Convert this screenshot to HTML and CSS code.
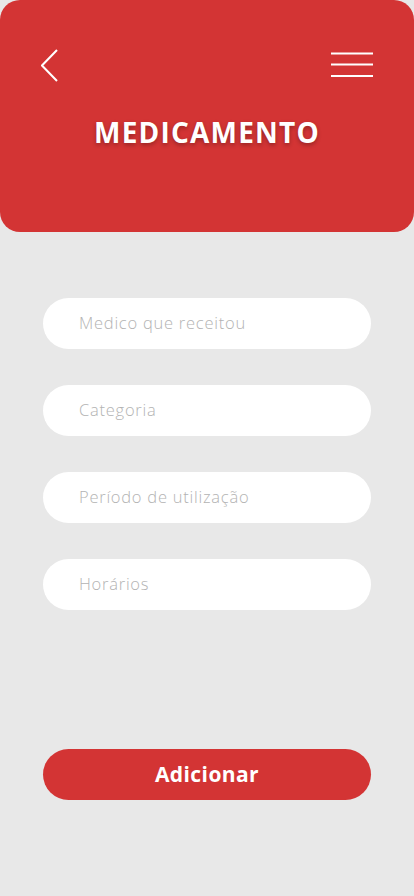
FILE: index.html
```html
<!DOCTYPE html>
<html lang="pt">
<head>
<meta charset="utf-8">
<link rel="stylesheet" href="styles.css">
</head>
<body>
<div class="screen">
  <header class="header">
    <div class="icons">
      <svg class="back" width="20" height="34" viewBox="0 0 20 34"><polyline points="16,1 1,16.5 16,32" fill="none" stroke="#fff" stroke-width="2"/></svg>
      <svg class="menu" width="42" height="26" viewBox="0 0 42 26"><g stroke="#fff" stroke-width="2.2"><line x1="0" y1="1.5" x2="42" y2="1.5"/><line x1="0" y1="12.5" x2="42" y2="12.5"/><line x1="0" y1="24" x2="42" y2="24"/></g></svg>
    </div>
    <h1 class="title">MEDICAMENTO</h1>
  </header>
  <form class="form">
    <input class="field" type="text" placeholder="Medico que receitou">
    <input class="field" type="text" placeholder="Categoria">
    <input class="field" type="text" placeholder="Período de utilização">
    <input class="field" type="text" placeholder="Horários">
    <button class="btn" type="button">Adicionar</button>
  </form>
</div>
</body>
</html>
```
FILE: styles.css
```css
* { box-sizing: border-box; }
html, body { margin: 0; padding: 0; }
body { background: #e8e8e8; font-family: "Open Sans", "Liberation Sans", sans-serif; }
.screen { width: 414px; height: 896px; display: flex; flex-direction: column; }
.header {
  height: 232px;
  background: #d33434;
  border-radius: 20px;
  padding: 49px 41px 0 41px;
  display: flex;
  flex-direction: column;
}
.icons { display: flex; justify-content: space-between; align-items: flex-start; }
.back { display: block; }
.menu { display: block; margin-top: 3px; }
.title {
  margin: 30px 0 0 0;
  text-align: center;
  color: #fff;
  font-size: 28px;
  line-height: 38px;
  font-weight: 700;
  letter-spacing: 1.2px;
  text-shadow: 0 2px 4px rgba(0,0,0,0.3);
}
.form { display: flex; flex-direction: column; padding: 66px 43px 0 43px; gap: 36px; }
.field {
  height: 51px;
  border: none;
  border-radius: 26px;
  background: #fff;
  padding: 0 0 3px 36px;
  font-family: "Open Sans", sans-serif;
  font-size: 16.5px;
  font-weight: 300;
  letter-spacing: 0.75px;
  outline: none;
}
.field::placeholder { color: #b3b3b3; }
.btn {
  margin-top: 103px;
  height: 51px;
  border: none;
  border-radius: 26px;
  background: #d33434;
  color: #fff;
  font-family: "Open Sans", sans-serif;
  font-weight: 700;
  font-size: 21px;
  letter-spacing: 0.4px;
  padding-bottom: 2px;
}
```
